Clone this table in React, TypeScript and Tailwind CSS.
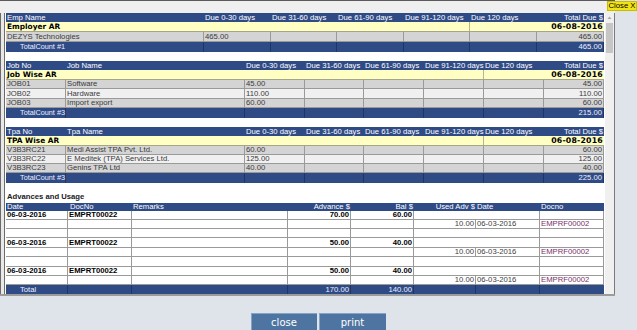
import React from "react";

type RowDef = { cells: string[]; h: string };

const BLUE = "bg-[#2f4b86]";

function AgingTable(props: {
  grid: string;
  headers: string[];
  title: string;
  titleSpan: string;
  dateSpan: string;
  date: string;
  rows: RowDef[];
  totalLabel: string;
  total: string;
  ncols: number;
  mt: string;
}) {
  const { grid, headers, title, titleSpan, dateSpan, date, rows, totalLabel, total, ncols, mt } = props;
  return (
    <div className={`w-[598px] ${mt}`}>
      <div className={`grid ${grid} h-[9px] ${BLUE} text-white`}>
        {headers.map((h, i) => (
          <div
            key={i}
            className={`flex items-center whitespace-nowrap px-[1px] ${i === headers.length - 1 ? "justify-end" : ""}`}
          >
            {h}
          </div>
        ))}
      </div>
      <div className={`grid ${grid} h-[10px] bg-[#ffffc4] border-b border-[#a5a58a]`}>
        <div className={`${titleSpan} flex items-center px-[1px] font-['DejaVu_Sans',sans-serif] font-bold text-[7.4px] text-black border-r border-[#b5b58f]`}>
          {title}
        </div>
        <div className={`${dateSpan} flex items-center justify-end px-[1px] font-['DejaVu_Sans',sans-serif] font-bold text-[7.8px] tracking-[0.2px] text-black`}>
          {date}
        </div>
      </div>
      {rows.map((r, ri) => (
        <div
          key={ri}
          className={`grid ${grid} ${r.h} ${ri % 2 === 0 ? "bg-[#d4d4d4]" : "bg-[#f0f0f0]"} text-[#3a3a3a]`}
        >
          {r.cells.map((c, ci) => (
            <div
              key={ci}
              className={`flex items-center whitespace-nowrap px-[1px] border-r border-b border-[#9a9a9a] ${ci === r.cells.length - 1 ? "justify-end" : ""}`}
            >
              {c}
            </div>
          ))}
        </div>
      ))}
      <div className={`grid ${grid} h-[10px] ${BLUE} text-[#eef0ff]`}>
        {Array.from({ length: ncols }).map((_, i) => (
          <div
            key={i}
            className={`flex items-center whitespace-nowrap border-r border-[#1e3566] ${i === 0 ? "pl-[14px] text-[7.3px]" : "px-[1px]"} ${i === ncols - 1 ? "justify-end" : ""}`}
          >
            {i === 0 ? totalLabel : i === ncols - 1 ? total : ""}
          </div>
        ))}
      </div>
    </div>
  );
}

const G1 = "grid-cols-[198px_67px_66px_67px_66px_67px_67px]";
const G2 = "grid-cols-[60px_179px_60px_59px_60px_60px_60px_60px]";
const GA = "grid-cols-[62px_64px_156px_63px_63px_62px_64px_64px]";

const cellA = "flex items-center whitespace-nowrap px-[1px] border-r border-b border-[#9a9a9a]";

function AdvRowA({ h }: { h: string }) {
  return (
    <div className={`grid ${GA} ${h} bg-white`}>
      <div className={`${cellA} font-bold text-black`}>06-03-2016</div>
      <div className={`${cellA} font-bold text-black`}>EMPRT00022</div>
      <div className={cellA}></div>
      <div className={`${cellA} justify-end font-bold text-black`}>{"__ADV__"}</div>
      <div className={`${cellA} justify-end font-bold text-black`}>{"__BAL__"}</div>
      <div className={`${cellA} col-span-2`}></div>
      <div className={cellA}></div>
    </div>
  );
}

function AdvA({ h, adv, bal }: { h: string; adv: string; bal: string }) {
  return (
    <div className={`grid ${GA} ${h} bg-white`}>
      <div className={`${cellA} font-bold text-black`}>06-03-2016</div>
      <div className={`${cellA} font-bold text-black`}>EMPRT00022</div>
      <div className={cellA}></div>
      <div className={`${cellA} justify-end font-bold text-black`}>{adv}</div>
      <div className={`${cellA} justify-end font-bold text-black`}>{bal}</div>
      <div className={`${cellA} col-span-2`}></div>
      <div className={cellA}></div>
    </div>
  );
}

function AdvB({ h }: { h: string }) {
  return (
    <div className={`grid ${GA} ${h} bg-white text-[#404040]`}>
      <div className={cellA}></div>
      <div className={cellA}></div>
      <div className={cellA}></div>
      <div className={cellA}></div>
      <div className={cellA}></div>
      <div className={`${cellA} justify-end`}>10.00</div>
      <div className={cellA}>06-03-2016</div>
      <div className={`${cellA} text-[#7a2f68]`}>EMPRF00002</div>
    </div>
  );
}

function AdvC({ h }: { h: string }) {
  return (
    <div className={`grid ${GA} ${h} bg-white`}>
      <div className={cellA}></div>
      <div className={cellA}></div>
      <div className={cellA}></div>
      <div className={cellA}></div>
      <div className={cellA}></div>
      <div className={`${cellA} col-span-2`}></div>
      <div className={cellA}></div>
    </div>
  );
}

export default function App() {
  void AdvRowA;
  return (
    <div className="relative w-[637px] h-[330px] overflow-hidden bg-[#dfe3ea] font-['Liberation_Sans',Arial,sans-serif] text-[7.7px] leading-none">
      <div className="w-[615px]">
        <div className="h-[1px] bg-[#5a5a5a]" />
        <div className="h-[12px] bg-[#efefef]" />
        <div className="flex h-[281px]">
          <div className="w-[5px] bg-[#e8e8e8] border-l border-r border-[#6a6a6a]" />
          <div className="w-[600px] bg-white pl-[1px] overflow-hidden">
            <AgingTable
              mt="mt-0"
              grid={G1}
              ncols={7}
              headers={["Emp Name", "Due 0-30 days", "Due 31-60 days", "Due 61-90 days", "Due 91-120 days", "Due 120 days", "Total Due $"]}
              title="Employer AR"
              titleSpan="col-span-5"
              dateSpan="col-span-2"
              date="06-08-2016"
              rows={[{ cells: ["DEZYS Technologies", "465.00", "", "", "", "", "465.00"], h: "h-[10px]" }]}
              totalLabel="TotalCount #1"
              total="465.00"
            />
            <AgingTable
              mt="mt-[9px]"
              grid={G2}
              ncols={8}
              headers={["Job No", "Job Name", "Due 0-30 days", "Due 31-60 days", "Due 61-90 days", "Due 91-120 days", "Due 120 days", "Total Due $"]}
              title="Job Wise AR"
              titleSpan="col-span-6"
              dateSpan="col-span-2"
              date="06-08-2016"
              rows={[
                { cells: ["JOB01", "Software", "45.00", "", "", "", "", "45.00"], h: "h-[9px]" },
                { cells: ["JOB02", "Hardware", "110.00", "", "", "", "", "110.00"], h: "h-[10px]" },
                { cells: ["JOB03", "Import export", "60.00", "", "", "", "", "60.00"], h: "h-[9px]" },
              ]}
              totalLabel="TotalCount #3"
              total="215.00"
            />
            <AgingTable
              mt="mt-[9px]"
              grid={G2}
              ncols={8}
              headers={["Tpa No", "Tpa Name", "Due 0-30 days", "Due 31-60 days", "Due 61-90 days", "Due 91-120 days", "Due 120 days", "Total Due $"]}
              title="TPA Wise AR"
              titleSpan="col-span-6"
              dateSpan="col-span-2"
              date="06-08-2016"
              rows={[
                { cells: ["V3B3RC21", "Medi Assist TPA Pvt. Ltd.", "60.00", "", "", "", "", "60.00"], h: "h-[9px]" },
                { cells: ["V3B3RC22", "E Meditek (TPA) Services Ltd.", "125.00", "", "", "", "", "125.00"], h: "h-[9px]" },
                { cells: ["V3B3RC23", "Genins TPA Ltd", "40.00", "", "", "", "", "40.00"], h: "h-[9px]" },
              ]}
              totalLabel="TotalCount #3"
              total="225.00"
            />
            <div className="h-[20px] flex items-end pb-[2px] pl-[1px] font-bold text-[#1a1a1a]">Advances and Usage</div>
            <div className="w-[598px]">
              <div className={`grid ${GA} h-[8px] ${BLUE} text-white`}>
                <div className="flex items-center px-[1px]">Date</div>
                <div className="flex items-center px-[2px]">DocNo</div>
                <div className="flex items-center px-[1px]">Remarks</div>
                <div className="flex items-center justify-end px-[1px]">Advance $</div>
                <div className="flex items-center justify-end px-[1px]">Bal $</div>
                <div className="flex items-center justify-end px-[1px] whitespace-nowrap">Used Adv $</div>
                <div className="flex items-center px-[1px]">Date</div>
                <div className="flex items-center px-[1px]">Docno</div>
              </div>
              <AdvA h="h-[9px]" adv="70.00" bal="60.00" />
              <AdvB h="h-[9px]" />
              <AdvC h="h-[9px]" />
              <AdvA h="h-[10px]" adv="50.00" bal="40.00" />
              <AdvB h="h-[9px]" />
              <AdvC h="h-[10px]" />
              <AdvA h="h-[9px]" adv="50.00" bal="40.00" />
              <AdvB h="h-[9px]" />
              <div className={`grid ${GA} h-[9px] ${BLUE} text-[#eef0ff]`}>
                <div className="flex items-center pl-[14px] border-r border-[#1e3566]">Total</div>
                <div className="border-r border-[#1e3566]"></div>
                <div className="border-r border-[#1e3566]"></div>
                <div className="flex items-center justify-end px-[1px] border-r border-[#1e3566]">170.00</div>
                <div className="flex items-center justify-end px-[1px] border-r border-[#1e3566]">140.00</div>
                <div className="border-r border-[#1e3566]"></div>
                <div className="border-r border-[#1e3566]"></div>
                <div></div>
              </div>
            </div>
          </div>
          <div className="w-[9px] bg-[#f0f0f0] flex flex-col items-center">
            <svg width="7" height="9" viewBox="0 0 7 9" className="mt-0">
              <path d="M1.5 6 L3.5 3.5 L5.5 6 Z" fill="#a8a8a8" />
            </svg>
            <div className="mt-[1px] w-[7px] h-[30px] bg-[#c6c6c6]" />
          </div>
          <div className="w-[1px] bg-[#7a7a7a]" />
        </div>
        <div className="h-[2px] bg-[#9c9c9c]" />
      </div>
      <div className="flex justify-center gap-[2px] mt-[17px] pr-[1px]">
        <button className="w-[66px] h-[18px] bg-[#4e75a1] border-t border-l border-[#86a3c5] text-white text-[10px] leading-none font-['DejaVu_Sans',sans-serif]">
          close
        </button>
        <button className="w-[67px] h-[18px] bg-[#4e75a1] border-t border-l border-[#86a3c5] text-white text-[10px] leading-none font-['DejaVu_Sans',sans-serif]">
          print
        </button>
      </div>
      <div className="absolute top-[1px] right-0 w-[30px] h-[10px] bg-[#f2e414] border border-[#c9bb00] flex items-center justify-center text-[7.7px] text-black">
        Close X
      </div>
    </div>
  );
}
